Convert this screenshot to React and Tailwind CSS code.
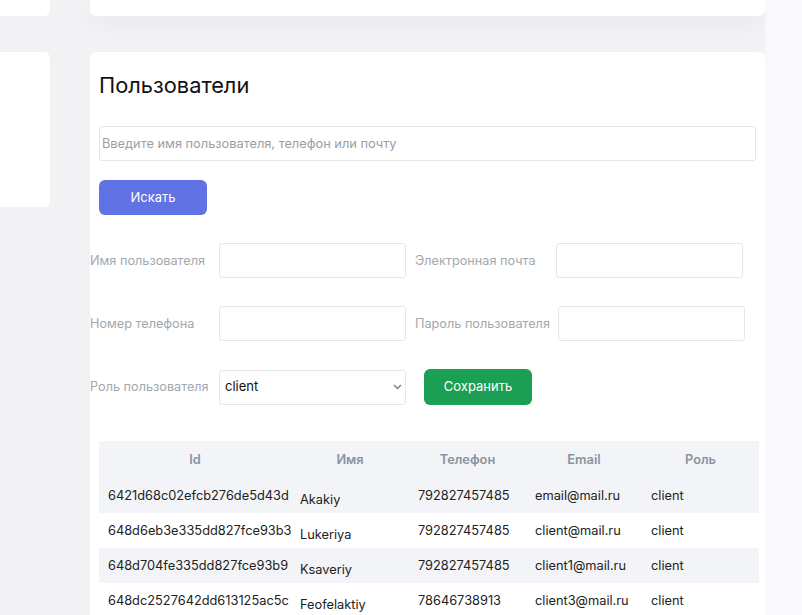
const users = [
  { id: '6421d68c02efcb276de5d43d', name: 'Akakiy', phone: '792827457485', email: 'email@mail.ru', role: 'client' },
  { id: '648d6eb3e335dd827fce93b3', name: 'Lukeriya', phone: '792827457485', email: 'client@mail.ru', role: 'client' },
  { id: '648d704fe335dd827fce93b9', name: 'Ksaveriy', phone: '792827457485', email: 'client1@mail.ru', role: 'client' },
  { id: '648dc2527642dd613125ac5c', name: 'Feofelaktiy', phone: '78646738913', email: 'client3@mail.ru', role: 'client' },
]

function Field({ label, labelWidth, className = '' }) {
  return (
    <div className={`flex items-center ${className}`}>
      <label className="shrink-0 text-[12.7px] text-[#a3a7ae]" style={{ width: labelWidth }}>
        {label}
      </label>
      <input
        type="text"
        className="h-[35px] w-[187px] rounded-[3px] border border-[#e4e6ea] bg-white px-2 text-[13px] outline-none"
      />
    </div>
  )
}

function App() {
  return (
    <div
      className="flex h-[615px] w-full overflow-hidden bg-[#f2f2f5] text-[#222]"
      style={{ fontFamily: 'Inter, "Noto Sans", sans-serif' }}
    >
      {/* left column */}
      <div className="flex w-[50px] shrink-0 flex-col gap-[36px]">
        <div className="h-[16px] shrink-0 rounded-br-[6px] bg-white" />
        <div className="h-[155px] shrink-0 rounded-r-[6px] bg-white" />
      </div>

      {/* main column */}
      <div className="ml-[40px] flex w-[675px] shrink-0 flex-col gap-[36px]">
        <div className="h-[16px] shrink-0 rounded-b-[6px] bg-white shadow-[0_8px_20px_rgba(0,0,0,0.04)]" />

        <div className="shrink-0 rounded-t-[6px] bg-white pb-[20px]">
          <div className="px-[9px] pt-[19px]">
            <h1 className="text-[21.8px] font-normal leading-[28px] text-[#111]">Пользователи</h1>

            <input
              type="text"
              placeholder="Введите имя пользователя, телефон или почту"
              className="mt-[27px] h-[35px] w-[657px] rounded-[3px] border border-[#e4e6ea] px-[2px] text-[12.8px] outline-none placeholder:text-[#9a9ea6]"
            />

            <button className="mt-[19px] flex h-[35px] w-[108px] items-center justify-center rounded-[6px] bg-[#6172e4] text-[13px] text-white">
              Искать
            </button>
          </div>

          <div className="mt-[28px] flex flex-col gap-[28px]">
            <div className="flex items-center">
              <Field label="Имя пользователя" labelWidth={129} />
              <Field label="Электронная почта" labelWidth={141} className="ml-[9px]" />
            </div>
            <div className="flex items-center">
              <Field label="Номер телефона" labelWidth={129} />
              <Field label="Пароль пользователя" labelWidth={143} className="ml-[9px]" />
            </div>
            <div className="flex items-center">
              <label className="w-[129px] shrink-0 text-[12.7px] text-[#a3a7ae]">Роль пользователя</label>
              <div className="relative">
                <select
                  defaultValue="client"
                  className="h-[35px] w-[187px] appearance-none rounded-[3px] border border-[#e4e6ea] bg-white px-[5px] text-[13px] text-[#111] outline-none"
                >
                  <option value="client">client</option>
                  <option value="admin">admin</option>
                </select>
                <svg
                  className="pointer-events-none absolute right-[4px] top-[14px]"
                  width="9"
                  height="6"
                  viewBox="0 0 9 6"
                  fill="none"
                  stroke="#777"
                  strokeWidth="1.3"
                >
                  <path d="M1 1l3.5 3.5L8 1" />
                </svg>
              </div>
              <button className="ml-[18px] h-[36px] w-[108px] rounded-[6px] bg-[#1b9f53] text-[13px] text-white">
                Сохранить
              </button>
            </div>
          </div>

          <div className="mt-[36px] px-[9px]">
            <table className="w-[660px] table-fixed border-collapse text-[12.8px]">
              <thead>
                <tr className="bg-[#f3f4f7]">
                  <th className="h-[37px] w-[192px] font-semibold text-[#8b93a1]">Id</th>
                  <th className="w-[118px] font-semibold text-[#8b93a1]">Имя</th>
                  <th className="w-[117px] font-semibold text-[#8b93a1]">Телефон</th>
                  <th className="w-[116px] font-semibold text-[#8b93a1]">Email</th>
                  <th className="font-semibold text-[#8b93a1]">Роль</th>
                </tr>
              </thead>
              <tbody>
                {users.map((u, i) => (
                  <tr key={u.id} className={i % 2 === 0 ? 'bg-[#f3f4f7]' : 'bg-white'}>
                    <td className="h-[35px] whitespace-nowrap pl-[9px] align-middle">{u.id}</td>
                    <td className="pl-[9px] pt-[8px] align-middle">{u.name}</td>
                    <td className="pl-[9px] align-middle">{u.phone}</td>
                    <td className="pl-[9px] align-middle">{u.email}</td>
                    <td className="pl-[9px] align-middle">{u.role}</td>
                  </tr>
                ))}
              </tbody>
            </table>
          </div>
        </div>
      </div>

      {/* right strip */}
      <div className="flex-1 bg-[#f9f9fb]" />
    </div>
  )
}

export default App
